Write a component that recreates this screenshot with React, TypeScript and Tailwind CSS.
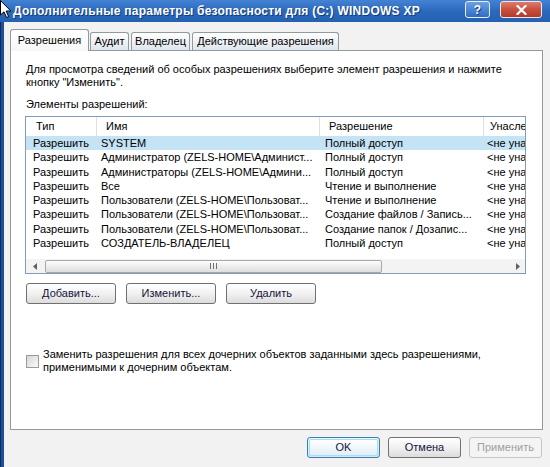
import React from "react";

const rows: [string, string, string, string][] = [
  ["Разрешить", "SYSTEM", "Полный доступ", "<не унаследовано>"],
  ["Разрешить", "Администратор (ZELS-HOME\\Админист...", "Полный доступ", "<не унаследовано>"],
  ["Разрешить", "Администраторы (ZELS-HOME\\Админи...", "Полный доступ", "<не унаследовано>"],
  ["Разрешить", "Все", "Чтение и выполнение", "<не унаследовано>"],
  ["Разрешить", "Пользователи (ZELS-HOME\\Пользоват...", "Чтение и выполнение", "<не унаследовано>"],
  ["Разрешить", "Пользователи (ZELS-HOME\\Пользоват...", "Создание файлов / Запись...", "<не унаследовано>"],
  ["Разрешить", "Пользователи (ZELS-HOME\\Пользоват...", "Создание папок / Дозапис...", "<не унаследовано>"],
  ["Разрешить", "СОЗДАТЕЛЬ-ВЛАДЕЛЕЦ", "Полный доступ", "<не унаследовано>"],
];

function Btn({ children, w = "w-[90px]" }: { children: React.ReactNode; w?: string }) {
  return (
    <div
      className={`${w} h-[21px] flex items-center justify-center rounded-[3px] border border-[#707070] bg-gradient-to-b from-[#ffffff] via-[#f1f1f1] to-[#dcdcdc] text-[#14143c]`}
    >
      {children}
    </div>
  );
}

export default function App() {
  return (
    <div className="relative w-[550px] h-[467px] overflow-hidden bg-[#f2f2f2] font-['Liberation_Sans',Arial,sans-serif] text-[11px] text-black">
      {/* Title bar */}
      <div className="h-[22px] flex items-start bg-gradient-to-b from-[#4482d4] via-[#2b69bc] to-[#2261b3]">
        <span className="ml-[13px] mt-[3px] text-white font-bold text-[12px] leading-[16px] tracking-[0.25px] whitespace-nowrap [text-shadow:1px_1px_0_#143a78]">
          Дополнительные параметры безопасности для (C:) WINDOWS XP
        </span>
        <div className="ml-auto mr-[8px] mt-[1px] flex gap-[10px]">
          <div className="w-[25px] h-[17px] rounded-[3px] border border-[#e8eef8] bg-gradient-to-b from-[#6aa0e4] to-[#2f6cc0] flex items-center justify-center text-white font-bold text-[12px] leading-none [text-shadow:1px_1px_0_#1a3d70]">
            ?
          </div>
          <div className="w-[42px] h-[17px] rounded-[3px] border border-[#f0e6e4] bg-gradient-to-b from-[#e07a6c] via-[#c8503f] to-[#b23a2c] flex items-center justify-center">
            <svg width="11" height="10" viewBox="0 0 11 10">
              <path d="M1.5 1 L9.5 9 M9.5 1 L1.5 9" stroke="#ffffff" strokeWidth="2.2" strokeLinecap="square" />
            </svg>
          </div>
        </div>
      </div>

      <div className="flex h-[445px]">
        {/* left window frame */}
        <div className="w-[4px] border-l border-[#0d2a5c] bg-[#1d4f99]" />
        <div className="flex-1 flex flex-col pl-[6px] pr-[7px]">
          {/* Tabs */}
          <div className="h-[28px] flex items-end">
            <div className="relative z-10 -mb-px w-[79px] h-[22px] rounded-t-[3px] border border-b-0 border-[#919b9c] bg-gradient-to-b from-[#ffffff] to-[#f7f7f7] flex items-center justify-center">
              Разрешения
            </div>
            <div className="ml-[1px] w-[39px] h-[18px] rounded-t-[3px] border border-b-0 border-[#919b9c] bg-gradient-to-b from-[#ffffff] to-[#dfe5ee] flex items-center justify-center">
              Аудит
            </div>
            <div className="ml-[2px] w-[59px] h-[18px] rounded-t-[3px] border border-b-0 border-[#919b9c] bg-gradient-to-b from-[#ffffff] to-[#dfe5ee] flex items-center justify-center">
              Владелец
            </div>
            <div className="ml-[2px] w-[147px] h-[18px] rounded-t-[3px] border border-b-0 border-[#919b9c] bg-gradient-to-b from-[#ffffff] to-[#dfe5ee] flex items-center justify-center">
              Действующие разрешения
            </div>
          </div>

          {/* Tab panel */}
          <div className="h-[380px] border border-[#919b9c] bg-white pl-[14px] pt-[12px] flex flex-col">
            <div className="leading-[13px] pl-[1px]">
              Для просмотра сведений об особых разрешениях выберите элемент разрешения и нажмите
              <br />
              кнопку "Изменить".
            </div>
            <div className="mt-[9px] leading-[13px] pl-[1px]">Элементы разрешений:</div>

            {/* List */}
            <div className="mt-[5px] w-[501px] h-[158px] border border-[#7f9db9] flex flex-col overflow-hidden">
              <div className="h-[19px] flex items-center whitespace-nowrap">
                <div className="w-[71px] h-full flex items-center pl-[10px] border-r border-[#e0e0e0]">Тип</div>
                <div className="w-[223px] h-full flex items-center pl-[9px] border-r border-[#e0e0e0]">Имя</div>
                <div className="w-[164px] h-full flex items-center pl-[9px] border-r border-[#e0e0e0]">Разрешение</div>
                <div className="flex-1 h-full flex items-center pl-[6px] overflow-hidden">Унаследовано от</div>
              </div>
              {rows.map((r, i) => (
                <div
                  key={i}
                  className={`h-[14.3px] flex items-center whitespace-nowrap ${i === 0 ? "bg-[#c4e3f4]" : ""}`}
                >
                  <div className="w-[71px] pl-[7px] overflow-hidden">{r[0]}</div>
                  <div className="w-[223px] pl-[4px] overflow-hidden">{r[1]}</div>
                  <div className="w-[164px] pl-[5px] overflow-hidden">{r[2]}</div>
                  <div className="flex-1 pl-[3px] overflow-hidden">{r[3]}</div>
                </div>
              ))}
              <div className="flex-1" />
              {/* horizontal scrollbar */}
              <div className="h-[14px] flex items-center bg-[#f3f3f3]">
                <div className="w-[18px] flex justify-center">
                  <svg width="5" height="7" viewBox="0 0 5 7">
                    <path d="M4 0 L0 3.5 L4 7 Z" fill="#606060" />
                  </svg>
                </div>
                <div className="ml-[1px] w-[337px] h-[13px] rounded-[2px] border border-[#a8a8a8] bg-gradient-to-b from-[#fdfdfd] to-[#dedede] flex items-center justify-center">
                  <svg width="7" height="6" viewBox="0 0 7 6">
                    <path d="M0.5 0 V6 M3.5 0 V6 M6.5 0 V6" stroke="#707070" strokeWidth="1" />
                  </svg>
                </div>
                <div className="flex-1" />
                <div className="w-[16px] flex justify-center">
                  <svg width="5" height="7" viewBox="0 0 5 7">
                    <path d="M1 0 L5 3.5 L1 7 Z" fill="#606060" />
                  </svg>
                </div>
              </div>
            </div>

            {/* list buttons */}
            <div className="mt-[9px] ml-[1px] flex gap-[10px]">
              <Btn>Добавить...</Btn>
              <Btn>Изменить...</Btn>
              <Btn>Удалить</Btn>
            </div>

            {/* checkbox */}
            <div className="mt-[44px] ml-[1px] flex items-center gap-[4px]">
              <div className="w-[13px] h-[13px] border border-[#9a9a9a] bg-gradient-to-br from-[#d6d6d6] to-[#fafafa]" />
              <div className="leading-[13px]">
                Заменить разрешения для всех дочерних объектов заданными здесь разрешениями,
                <br />
                применимыми к дочерним объектам.
              </div>
            </div>
          </div>

          {/* Bottom buttons */}
          <div className="mt-[7px] mr-[1px] flex justify-end gap-[8px]">
            <div className="w-[73px] h-[21px] rounded-[3px] border border-[#3c7fb1] bg-gradient-to-b from-[#eaf6fd] to-[#d0e9f8] p-[1px]">
              <div className="w-full h-full rounded-[2px] border border-[#a9dcf5] bg-gradient-to-b from-[#ffffff] to-[#e2eef6] flex items-center justify-center text-[#14143c]">
                OK
              </div>
            </div>
            <Btn w="w-[73px]">Отмена</Btn>
            <div className="w-[73px] h-[21px] rounded-[3px] border border-[#c5c5c5] bg-[#f4f4f4] flex items-center justify-center text-[#a0a0a0]">
              Применить
            </div>
          </div>
        </div>
      </div>

      {/* mouse cursor */}
      <svg className="absolute left-0 top-0" width="12" height="19" viewBox="0 0 12 19">
        <path d="M0.5 0.5 L0.5 15 L4 11.8 L6.5 17.5 L8.6 16.6 L6.2 11 L10.8 11 Z" fill="#ffffff" stroke="#000000" strokeWidth="1" />
      </svg>
    </div>
  );
}
